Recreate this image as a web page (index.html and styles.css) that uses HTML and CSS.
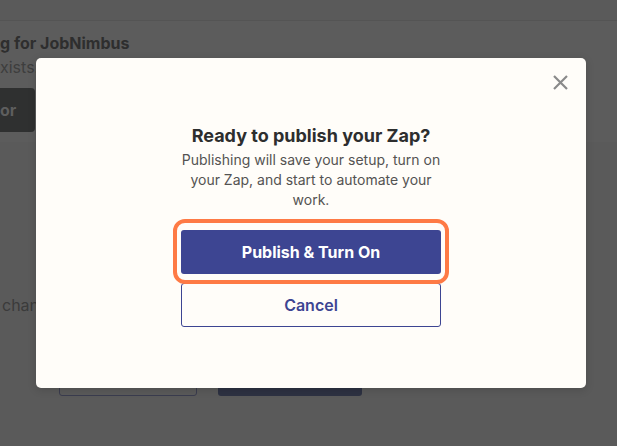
FILE: index.html
```html
<!DOCTYPE html>
<html lang="en">
<head>
<meta charset="utf-8">
<title>Publish Zap</title>
<link rel="stylesheet" href="styles.css">
</head>
<body>
<div class="page">
  <header class="topbar"></header>
  <section class="card">
    <h2 class="card-title">g for JobNimbus</h2>
    <p class="card-text">xists.</p>
    <div class="card-btn">or</div>
  </section>
  <section class="content">
    <p class="skip-text">changes</p>
    <div class="actions">
      <button class="btn-outline">Test action</button>
      <button class="btn-dark">Publish Zap</button>
    </div>
  </section>
</div>

<div class="modal" role="dialog">
  <button class="close" aria-label="Close">
    <svg width="15" height="15" viewBox="0 0 15 15"><path d="M1 1L14 14M14 1L1 14" stroke="#8a8a8a" stroke-width="2.2" stroke-linecap="butt" fill="none"/></svg>
  </button>
  <h1 class="modal-title">Ready to publish your Zap?</h1>
  <p class="modal-desc">Publishing will save your setup, turn on your Zap, and start to automate your work.</p>
  <div class="modal-actions">
    <button class="btn-publish">Publish &amp; Turn On</button>
    <button class="btn-cancel">Cancel</button>
  </div>
</div>
</body>
</html>
```
FILE: styles.css
```css
* { box-sizing: border-box; }
html, body { margin: 0; padding: 0; }
body {
  width: 617px;
  height: 446px;
  overflow: hidden;
  background: #5a5a5a;
  font-family: Inter, "Noto Sans", sans-serif;
  position: relative;
}
.page { display: flex; flex-direction: column; }
.topbar {
  height: 21px;
  background: #5a5a5a;
  border-bottom: 1px solid #545454;
}
.card {
  background: #5c5c5c;
  padding: 10px 0 10px 0;
  height: 121px;
}
.card-title {
  margin: 0;
  font-size: 16px;
  line-height: 24px;
  font-weight: 700;
  color: #2e2e2e;
}
.card-text {
  margin: 0;
  font-size: 16px;
  line-height: 24px;
  color: #3e3e3e;
}
.card-btn {
  margin-top: 9px;
  width: 35px;
  height: 44px;
  background: #2f3030;
  border-radius: 0 4px 4px 0;
  color: #5e5e5e;
  font-weight: 700;
  font-size: 16px;
  line-height: 44px;
  padding-left: 0;
  white-space: nowrap;
}
.content { padding-left: 2px; }
.skip-text {
  margin: 151px 0 0 0;
  font-size: 16px;
  line-height: 24px;
  color: #3b3b3b;
}
.actions {
  margin: 39px 0 0 57px;
  display: flex;
  gap: 21px;
}
.btn-outline, .btn-dark {
  font-family: inherit;
  font-size: 16px;
  height: 40px;
  border-radius: 3px;
  padding: 0;
}
.btn-outline {
  width: 138px;
  background: transparent;
  border: 1px solid #3a3c4e;
  color: #3a3c4e;
}
.btn-dark {
  width: 144px;
  background: #2d3142;
  border: none;
  color: #3a3d4e;
}

.modal {
  position: absolute;
  left: 36px;
  top: 58px;
  width: 550px;
  height: 330px;
  background: #fffdf9;
  border-radius: 5px;
  box-shadow: 0 2px 8px rgba(0,0,0,0.15);
  display: flex;
  flex-direction: column;
  align-items: center;
  padding-top: 66px;
}
.close {
  position: absolute;
  top: 17px;
  right: 18px;
  width: 15px;
  height: 15px;
  padding: 0;
  border: none;
  background: none;
  display: block;
}
.close svg { display: block; }
.modal-title {
  margin: 0;
  font-size: 18px;
  line-height: 24px;
  font-weight: 700;
  color: #2d2e2e;
}
.modal-desc {
  margin: 2px 0 0 0;
  max-width: 272px;
  text-align: center;
  font-size: 14px;
  line-height: 20px;
  color: #545352;
}
.modal-actions {
  margin-top: 20px;
  width: 260px;
  display: flex;
  flex-direction: column;
  gap: 9px;
}
.btn-publish, .btn-cancel {
  font-family: inherit;
  height: 44px;
  border-radius: 3px;
  font-size: 16px;
  padding: 0;
  width: 100%;
}
.btn-publish {
  position: relative;
  background: #3d4592;
  color: #ffffff;
  border: none;
  font-weight: 700;
}
.btn-publish::after {
  content: "";
  position: absolute;
  top: -11px;
  bottom: -10px;
  left: -8px;
  right: -8px;
  border: 4px solid #fe7a45;
  border-radius: 12px;
}
.btn-cancel {
  background: transparent;
  border: 1px solid #3d4592;
  color: #3d4592;
  font-weight: 600;
}
```
